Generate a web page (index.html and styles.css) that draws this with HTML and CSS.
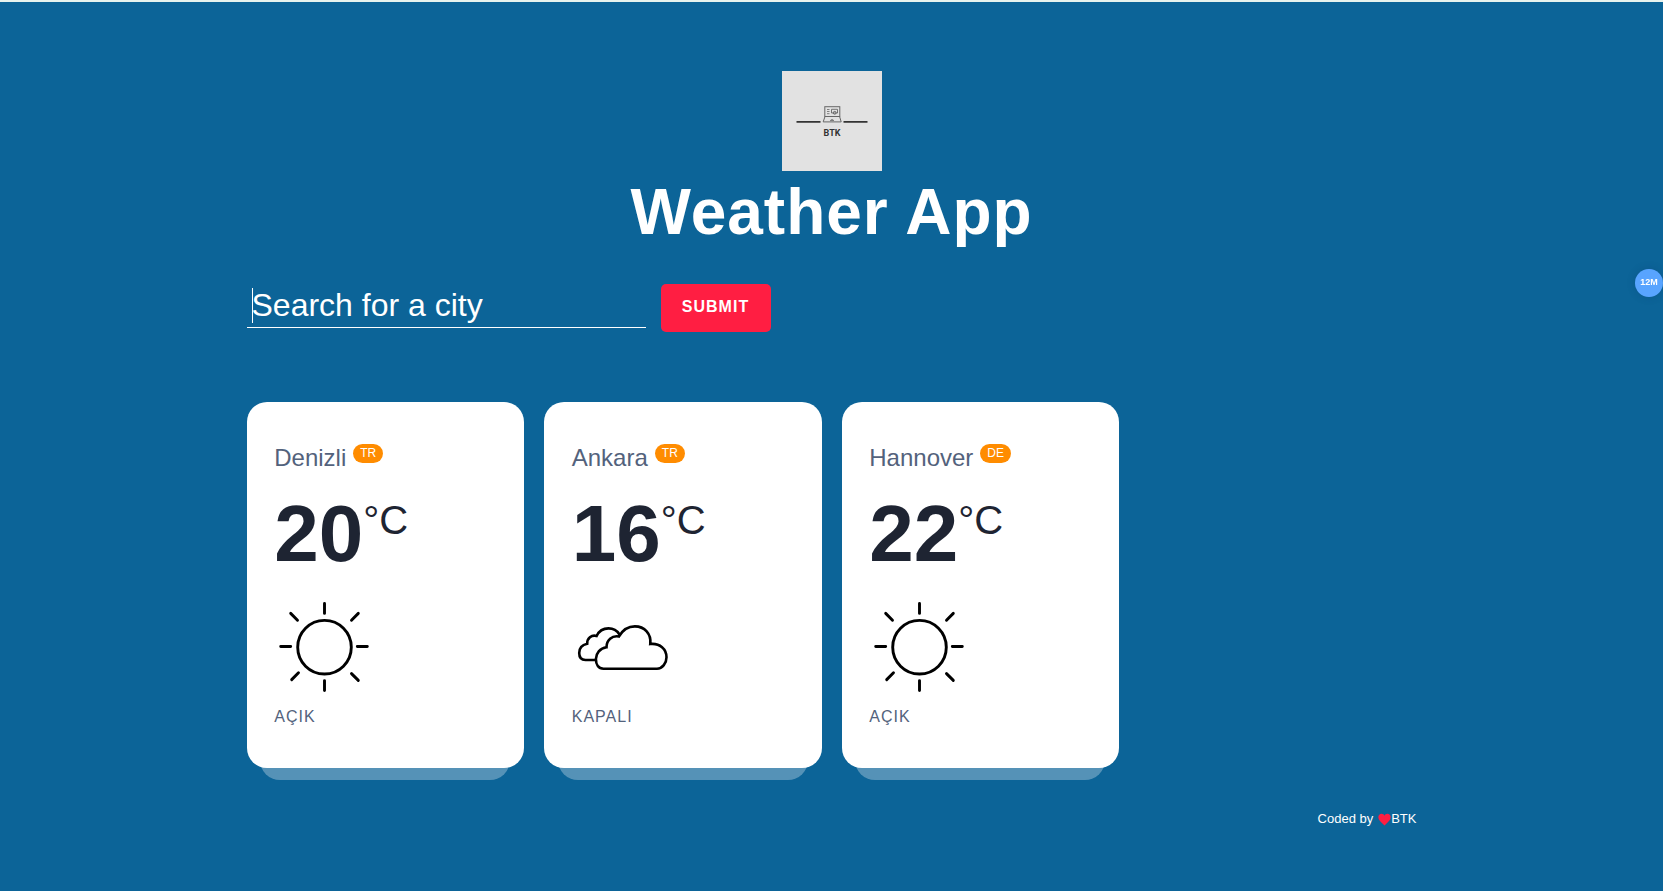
FILE: index.html
```html
<!DOCTYPE html>
<html lang="tr">
<head>
<meta charset="utf-8">
<meta name="viewport" content="width=device-width, initial-scale=1">
<title>Weather App</title>
<link rel="stylesheet" href="styles.css">
</head>
<body>
<svg class="symbols" aria-hidden="true">
  <symbol id="sun" viewBox="0 0 100 100">
    <g fill="none" stroke="#000" stroke-width="2.9" stroke-linecap="round">
      <circle cx="50.5" cy="50.2" r="26.8"/>
      <path d="M50.5 6.4V16.4M50.5 83.6V93.6M6.7 49.5H16.7M83.3 49.5H93.3M16.7 16.4L23.5 23.2M77.5 23.2L84.3 16.4M17.7 82.6L24.5 75.8M77.5 76.6L84.3 83.4"/>
    </g>
  </symbol>
  <symbol id="clouds" viewBox="0 0 100 100">
    <g fill="none" stroke="#000" stroke-width="2.6">
      <path d="M31.5 71.7H85C90.500 71.700 94.500 66 94.500 60.300C94.500 52 88 46 78.300 47C79.500 37 72.500 29.400 62.900 29.400C56.500 29.400 51 32.600 46.900 39.500C40 38.300 34.500 43 34.500 50.300C28 51 23.900 56.500 23.900 62C23.900 67.500 26.500 71.700 31.500 71.700Z"/>
      <path d="M47.500 37.500C45 33.500 41.500 31.400 36.500 31.400C31 31.400 27 34 24.600 39C19.500 37.500 15 41.500 15.200 46.700C10 47.800 7.200 51.500 7.200 56C7.200 60.500 9 63 13.500 63H24"/>
    </g>
  </symbol>
</svg>

<main class="page">
  <header class="hero">
    <svg class="logo" viewBox="0 0 100 100" role="img" aria-label="BTK">
      <rect width="100" height="100" fill="#e2e2e2"/>
      <path d="M14.500 50.900H38.500M61.500 50.900H85.500" stroke="#333" stroke-width="1.700"/>
      <g fill="none" stroke="#666" stroke-width="1">
        <rect x="42.800" y="35.700" width="15" height="9.800"/>
        <path d="M43 45.500L41.200 50.900H59.200L57.600 45.500"/>
        <path d="M45 38.500H47.500M45 40.500H47.500M45 42.700H47.500" stroke-width=".8"/>
        <path d="M49.500 38.300H55.500V42H49.500Z" stroke-width=".9"/>
        <circle cx="52.700" cy="41.800" r="1.400"/>
        <path d="M48.300 49.500Q50 47.200 51.800 49.500Z" stroke-width=".8"/>
      </g>
      <text class="logo-text" x="50" y="64.500" text-anchor="middle">BTK</text>
    </svg>
    <h1 class="title">Weather App</h1>
  </header>

  <form class="search">
    <label class="search-field">
      <input class="search-input" type="text" placeholder="Search for a city" aria-label="Search for a city">
    </label>
    <button class="search-button" type="submit">SUBMIT</button>
  </form>

  <ul class="cities">
    <li class="city">
      <h2 class="city-name"><span>Denizli</span><sup class="country">TR</sup></h2>
      <div class="temp"><span class="degrees">20</span><sup class="unit">°C</sup></div>
      <svg class="icon" aria-hidden="true"><use href="#sun"/></svg>
      <p class="summary">AÇIK</p>
    </li>
    <li class="city">
      <h2 class="city-name"><span>Ankara</span><sup class="country">TR</sup></h2>
      <div class="temp"><span class="degrees">16</span><sup class="unit">°C</sup></div>
      <svg class="icon" aria-hidden="true"><use href="#clouds"/></svg>
      <p class="summary">KAPALI</p>
    </li>
    <li class="city">
      <h2 class="city-name"><span>Hannover</span><sup class="country">DE</sup></h2>
      <div class="temp"><span class="degrees">22</span><sup class="unit">°C</sup></div>
      <svg class="icon" aria-hidden="true"><use href="#sun"/></svg>
      <p class="summary">AÇIK</p>
    </li>
  </ul>

  <footer class="credit">
    <span>Coded by</span>
    <svg class="heart" viewBox="0 0 12 12" aria-hidden="true"><path fill="#ff1e42" d="M6 11.500C2.500 8.500 .3 6.500 .3 4C.3 2 1.700 .8 3.300 .8C4.500 .8 5.500 1.500 6 2.500C6.500 1.500 7.500 .8 8.700 .8C10.300 .8 11.700 2 11.700 4C11.700 6.500 9.500 8.500 6 11.500Z"/></svg>
    <span>BTK</span>
  </footer>
</main>
<div class="floating-badge">12M</div>
</body>
</html>
```
FILE: styles.css
```css
:root {
  --text-light: #fff;
  --text-medium: #53627c;
  --text-dark: #1e2432;
  --red: #ff1e42;
  --orange: #ff8c00;
  --background: #0c6498;
}

* {
  box-sizing: border-box;
}

body {
  margin: 0;
  min-height: 100vh;
  border-top: 2px solid #e8f3ee;
  background: var(--background);
  color: var(--text-light);
  font-family: "Liberation Sans", Arial, sans-serif;
}

h1, h2, p, ul {
  margin: 0;
  padding: 0;
  font-weight: 400;
}

.symbols {
  display: none;
}

.page {
  max-width: 1200px;
  margin: 0 auto;
  padding: 69px 15px 40px;
}

.hero {
  display: flex;
  flex-direction: column;
  align-items: center;
}

.logo {
  width: 100px;
  height: 100px;
}

.logo-text {
  font: 700 9px Roboto, sans-serif;
  fill: #333;
}

.title {
  font-size: 64px;
  line-height: 82px;
  font-weight: 700;
  letter-spacing: 1px;
}

.search {
  display: flex;
  align-items: center;
  gap: 15px;
  max-width: 524px;
  margin-top: 31px;
}

.search-field {
  position: relative;
  display: flex;
  flex: 1;
  min-width: 0;
}

.search-field::before {
  content: "";
  position: absolute;
  left: 5px;
  top: 0;
  width: 1px;
  height: 35px;
  background: var(--text-light);
}

.search-input {
  width: 100%;
  height: 40px;
  padding: 0 5px 4px;
  border: 0;
  border-bottom: 1px solid var(--text-light);
  border-radius: 0;
  outline: 0;
  background: transparent;
  color: inherit;
  font: 32px "Liberation Sans", Arial, sans-serif;
}

.search-input::placeholder {
  color: inherit;
  opacity: 1;
}

.search-button {
  min-width: 110px;
  height: 48px;
  padding: 0 20px 2px;
  border: 0;
  border-radius: 5px;
  background: var(--red);
  color: inherit;
  font: 700 16px "Liberation Sans", Arial, sans-serif;
  letter-spacing: 1px;
}

.cities {
  display: grid;
  grid-template-columns: repeat(4, 1fr);
  gap: 20px;
  margin-top: 70px;
  list-style: none;
}

.city {
  position: relative;
  padding: 40px 10%;
  border-radius: 20px;
  background: #fff;
  color: var(--text-medium);
}

.city::after {
  content: "";
  position: absolute;
  z-index: -1;
  left: 5%;
  bottom: -12px;
  width: 90%;
  height: 50px;
  border-radius: 20px;
  background: rgba(255, 255, 255, 0.3);
}

.city-name {
  display: flex;
  align-items: flex-start;
  gap: 7px;
  font-size: 24px;
  line-height: 32px;
}

.country {
  margin-top: 2px;
  padding: 0 7px;
  border-radius: 10px;
  background: var(--orange);
  color: var(--text-light);
  font-size: 12px;
  line-height: 19px;
}

.temp {
  display: flex;
  align-items: flex-start;
  margin-top: 20px;
  color: var(--text-dark);
}

.degrees {
  font-size: 80px;
  line-height: 80px;
  font-weight: 700;
}

.unit {
  font-size: 40px;
  line-height: 52px;
}

.icon {
  display: block;
  width: 100px;
  height: 100px;
  margin-top: 23px;
}

.summary {
  margin-top: 9px;
  font-size: 16px;
  line-height: 22px;
  letter-spacing: 1px;
}

.credit {
  display: flex;
  justify-content: flex-end;
  align-items: center;
  margin-top: 41px;
  font-size: 13px;
  line-height: 20px;
}

.heart {
  width: 13px;
  height: 13px;
  margin-left: 5px;
}

.floating-badge {
  position: fixed;
  top: 269px;
  right: 0;
  width: 28px;
  height: 28px;
  border-radius: 50%;
  background: #58a4ff;
  box-shadow: 0 0 8px rgba(0, 40, 90, 0.2);
  font: 700 9px/26px "Liberation Sans", Arial, sans-serif;
  text-align: center;
}
```
